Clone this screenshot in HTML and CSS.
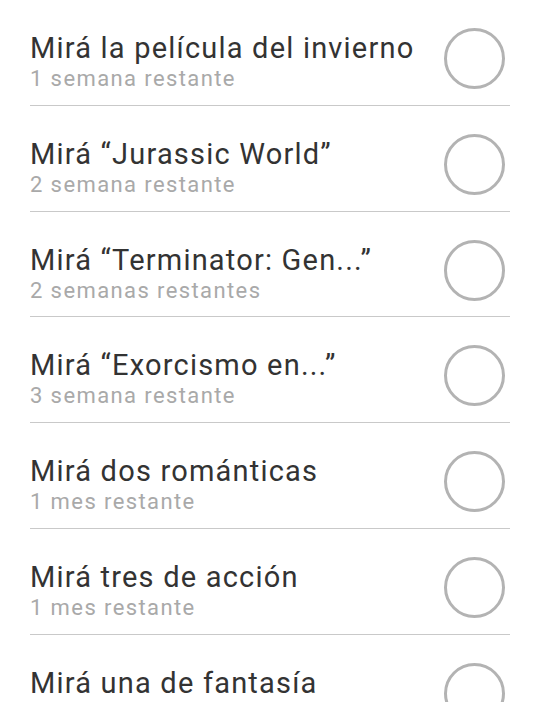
FILE: index.html
```html
<!DOCTYPE html>
<html lang="es">
<head>
<meta charset="utf-8">
<title>Desafíos</title>
<link rel="stylesheet" href="styles.css">
</head>
<body>
<ul class="list">
  <li class="row"><div class="text"><div class="title">Mirá la película del invierno</div><div class="sub">1 semana restante</div></div><span class="check"></span></li>
  <li class="row"><div class="text"><div class="title">Mirá “Jurassic World”</div><div class="sub">2 semana restante</div></div><span class="check"></span></li>
  <li class="row"><div class="text"><div class="title">Mirá “Terminator: Gen...”</div><div class="sub">2 semanas restantes</div></div><span class="check"></span></li>
  <li class="row"><div class="text"><div class="title">Mirá “Exorcismo en...”</div><div class="sub">3 semana restante</div></div><span class="check"></span></li>
  <li class="row"><div class="text"><div class="title">Mirá dos románticas</div><div class="sub">1 mes restante</div></div><span class="check"></span></li>
  <li class="row"><div class="text"><div class="title">Mirá tres de acción</div><div class="sub">1 mes restante</div></div><span class="check"></span></li>
  <li class="row"><div class="text"><div class="title">Mirá una de fantasía</div></div><span class="check"></span></li>
</ul>
</body>
</html>
```
FILE: styles.css
```css
html, body {
  margin: 0;
  padding: 0;
  background: #ffffff;
  overflow: hidden;
}
body {
  font-family: Roboto, "Noto Sans", "Liberation Sans", sans-serif;
  width: 540px;
  height: 702px;
}
.list {
  list-style: none;
  margin: 0 30px;
  padding: 0;
}
.row {
  box-sizing: border-box;
  height: 105.8px;
  display: flex;
  align-items: flex-start;
  justify-content: space-between;
  padding-top: 28px;
  border-bottom: 1px solid #c9c9c9;
}
.text {
  margin-top: 3px;
}
.title {
  font-size: 29px;
  line-height: 34px;
  letter-spacing: 1.2px;
  color: #333333;
  white-space: nowrap;
}
.sub {
  font-size: 22px;
  line-height: 27px;
  letter-spacing: 1.4px;
  color: #a9a9a9;
  white-space: nowrap;
}
.check {
  box-sizing: border-box;
  width: 61px;
  height: 61px;
  border: 3px solid #b3b3b3;
  border-radius: 50%;
  margin-right: 5px;
  flex: none;
}
```
